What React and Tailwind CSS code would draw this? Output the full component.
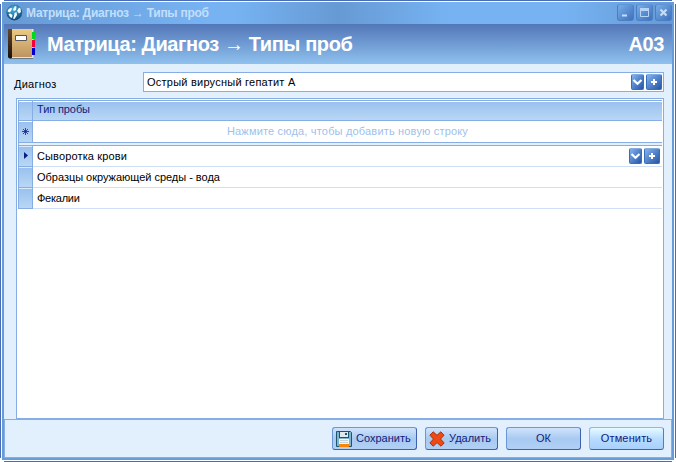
import React from "react";

function Globe() {
  return (
    <svg className="h-[17px] w-[17px] shrink-0" viewBox="0 0 17 17">
      <defs>
        <radialGradient id="globe" cx=".45" cy=".3" r=".7">
          <stop offset="0" stopColor="#4fb4dc" />
          <stop offset="1" stopColor="#0d4676" />
        </radialGradient>
      </defs>
      <circle cx="8.300" cy="8.500" r="7.900" fill="url(#globe)" />
      <path d="M1.500 7.500C2 5 4 3.500 6 4l-.5 2L4 8.500zM7 5.500l2-3.500 1.500.5-.5 3.500-2 1zM11 7l2-3.500 1.500 1L15 8l-2 1.500zM8.500 9l2-1 .5 3-2.500 4-1.500-.5 1-2.500zM2.500 10l2-.5 2 1.500-.5 3-2-1z" fill="#f0faff" />
    </svg>
  );
}

function Book() {
  return (
    <svg className="h-8 w-7 shrink-0" viewBox="0 0 28 32">
      <defs>
        <linearGradient id="cover" x2="0" y2="1">
          <stop stopColor="#edca85" />
          <stop offset="1" stopColor="#bd9461" />
        </linearGradient>
        <linearGradient id="spine" x2="0" y2="1">
          <stop stopColor="#65482c" />
          <stop offset="1" stopColor="#17100d" />
        </linearGradient>
      </defs>
      <path d="M2 29h24v1.500H2z" fill="#4a3a2b" />
      <path d="M5 1h21.500v29H5z" fill="#eee1c5" />
      <path d="M5 1h20v28H5z" fill="url(#cover)" />
      <path d="M1 1h4v28l-1 1.500-3-1z" fill="url(#spine)" />
      <path d="M8.500 7.500h11v5h-11z" fill="#fff" stroke="#53545c" />
      <path d="M25 4h3v7h-3z" fill="#00d820" />
      <path d="M25 12h3v7h-3z" fill="#f4003a" />
      <path d="M25 20h3v7h-3z" fill="#0000d0" />
    </svg>
  );
}

function WindowButton({ children }) {
  return (
    <div className="h-[17px] w-[17px] rounded-[3px] border border-[#4b7fc5] border-t-[#5f95d8] bg-linear-to-br from-[#79ade8] to-[#3c72bd]">
      <svg className="block h-[15px] w-[15px]" viewBox="0 0 15 15">{children}</svg>
    </div>
  );
}

function FieldButtons() {
  return (
    <div className="flex gap-[2px]">
      <div className="h-4 w-[13px] rounded-[2px] border border-[#386db8] border-t-[#82abe0] bg-linear-to-br from-[#84b3ee] to-[#2456a8]">
        <svg className="block h-[14px] w-[11px]" viewBox="0 0 11 14">
          <path d="M1.500 5l4 3.700L9.500 5" fill="none" stroke="#fff" strokeWidth="2.200" />
        </svg>
      </div>
      <div className="h-4 w-4 rounded-[2px] border border-[#386db8] border-t-[#82abe0] bg-linear-to-br from-[#84b3ee] to-[#2456a8]">
        <svg className="block h-[14px] w-[14px]" viewBox="0 0 14 14">
          <path d="M4 7h6M7 4v6" fill="none" stroke="#fff" strokeWidth="2" />
        </svg>
      </div>
    </div>
  );
}

function Floppy() {
  return (
    <svg className="h-4 w-4 shrink-0" viewBox="0 0 16 16">
      <path d="M.5.5h14l1 1v14H.5z" fill="#7fb4cc" stroke="#1d556e" />
      <path d="M3 0h10v7H3z" fill="#1d556e" />
      <path d="M4 1h8v5H4z" fill="#dfe8ec" />
      <path d="M9 2h2v2H9z" fill="#1d556e" />
      <path d="M3 8h10v8H3z" fill="#f3f6f8" />
      <path d="M4 9.500h8M4 11.500h8" stroke="#c6d2d8" />
      <path d="M3 13h10v3H3z" fill="#f58508" />
    </svg>
  );
}

function Cross() {
  return (
    <svg className="h-4 w-4 shrink-0" viewBox="0 0 16 16">
      <path d="M4.200.8L8 4.300 11.800.8l3.200 3.400L11.500 8l3.700 4-3.200 3.200L8 11.600 4.200 15.200.9 12 4.500 8 .9 4.200z" fill="#f04a12" stroke="#a8300e" strokeLinejoin="round" />
    </svg>
  );
}

const button =
  "flex h-[23px] items-center rounded-[3px] border border-[#6d96d8] border-r-[#3f5fb0] border-b-[#3f5fb0] bg-linear-to-b from-[#cfe4fb] via-[#a9caf0] to-[#b0d0f6] text-[#14207c]";

function Row({ children, marker, buttons, tracking }) {
  return (
    <div className="flex h-[21px]">
      <div className="flex w-[15px] items-center border-x border-b border-[#86aee4] bg-linear-to-b from-[#98c0ee] to-[#b9d7f5] pl-[5px] shadow-[inset_0_1px_#d8eafc]">
        {marker && (
          <svg className="mb-px h-[7px] w-1" viewBox="0 0 4 7">
            <path d="M0 0l4 3.500L0 7z" fill="#0c1c80" />
          </svg>
        )}
      </div>
      <div className="flex flex-1 items-start justify-between border-b border-[#cfdff5] bg-white pr-[2px] pl-1">
        <span className={"leading-[21px] " + tracking}>{children}</span>
        {buttons && <div className="pt-[2px]"><FieldButtons /></div>}
      </div>
    </div>
  );
}

export default function App() {
  return (
    <div className="grid h-[462px] w-[676px] grid-cols-[1px_1px_1fr_1px_1px] grid-rows-[1px_1px_1fr_1px_1px] overflow-hidden bg-white font-['Liberation_Sans',Arial,sans-serif] text-[11px] whitespace-nowrap text-black">
      <div className="col-start-3 row-start-1 mx-[2px] bg-[#4a6bb5]" />
      <div className="col-start-1 row-start-3 my-[2px] bg-[#4a6bb5]" />
      <div className="col-start-5 row-start-3 my-[2px] bg-[#4a6bb5]" />
      <div className="col-start-3 row-start-5 mx-[2px] bg-[#4a6bb5]" />
      <div className="col-start-3 row-start-3 flex flex-col border-x-2 border-b-2 border-[#669cd8] bg-[#e2f0fe]">
        <header className="flex h-[22px] shrink-0 items-center bg-[linear-gradient(90deg,#669ad4_0%,#77b3f3_31%,#77b3f3_34%,#669ad4_50%,#77b3f3_67%,#77b3f3_83%,#669ad4_100%)] pb-px pl-[2px]">
          <Globe />
          <span className="ml-[3px] text-[12px] font-bold tracking-[-0.26px] text-[#c2dffc]">
            Матрица: Диагноз <span className="font-normal">→</span> Типы проб
          </span>
          <div className="ml-auto flex gap-[2px]">
            <WindowButton><path d="M4 10.500h5" stroke="#c5def8" strokeWidth="2" /></WindowButton>
            <WindowButton><path d="M3.500 4v7.500h8V4M3 4.500h9" fill="none" stroke="#b7d4f5" /><path d="M3 3h9v3H3z" fill="#b7d4f5" /></WindowButton>
            <WindowButton><path d="M4.500 4.500l6 6M10.500 4.500l-6 6" stroke="#c5def8" strokeWidth="2.200" /></WindowButton>
          </div>
        </header>
        <div className="flex h-10 shrink-0 items-center bg-linear-to-b from-[#5377b8] to-[#8fc1ee] pr-2 pl-[3px] text-[20px] font-bold tracking-[-0.4px] text-white">
          <Book />
          <span className="ml-3">
            Матрица: Диагноз <span className="font-normal">→</span> Типы проб
          </span>
          <span className="ml-auto">A03</span>
        </div>
        <main className="flex flex-1 flex-col pt-2">
          <div className="flex h-5 pl-[10px]">
            <label className="w-[129px] pt-1 tracking-[0.25px]">Диагноз</label>
            <div className="flex h-5 w-[521px] items-center justify-between border border-[#86aee4] bg-white pr-px pl-[3px]">
              <span className="tracking-[0.23px]">Острый вирусный гепатит A</span>
              <FieldButtons />
            </div>
          </div>
          <div className="mt-[6px] ml-3 flex w-[648px] flex-1 flex-col border border-b-0 border-[#86aee4] bg-white p-px">
            <div className="flex h-[21px] border-y border-[#86aee4] text-[#14207c]">
              <div className="w-[15px] border-x border-[#86aee4] bg-linear-to-b from-[#98c0ee] to-[#b9d7f5] shadow-[inset_0_1px_white]" />
              <div className="flex-1 bg-linear-to-b from-[#98c0ee] to-[#b9d7f5] pl-1 leading-[17px] tracking-[-0.1px] shadow-[inset_0_1px_white]">Тип пробы</div>
            </div>
            <div className="flex h-[22px] border-b border-[#86aee4]">
              <div className="flex w-[15px] items-center justify-center border-x border-[#86aee4] bg-linear-to-b from-[#98c0ee] to-[#b9d7f5] shadow-[inset_0_1px_white]">
                <svg className="mb-px h-[7px] w-[7px]" viewBox="0 0 7 7">
                  <path d="M3.500 0v7M0 3.500h7M1 1l5 5M6 1L1 6" stroke="#14207c" strokeWidth=".8" />
                </svg>
              </div>
              <span className="flex-1 text-center leading-[21px] tracking-[0.18px] text-[#a0bfec]">Нажмите сюда, чтобы добавить новую строку</span>
            </div>
            <div className="h-[3px] border-b border-l border-[#86aee4] bg-[#e2f0fe]" />
            <Row marker buttons tracking="tracking-[0.13px]">Сыворотка крови</Row>
            <Row tracking="tracking-[-0.02px]">Образцы окружающей среды - вода</Row>
            <Row tracking="tracking-[-0.25px]">Фекалии</Row>
          </div>
          <div className="ml-3 h-px w-[648px] bg-[#86aee4]" />
        </main>
        <footer className="flex h-[39px] shrink-0 items-start justify-end gap-2 border border-[#86aee4] pt-[7px] pr-[7px]">
          <button className={button + " w-[85px] gap-1 pl-[3px]"}><Floppy />Сохранить</button>
          <button className={button + " w-[73px] gap-1 pl-[3px]"}><Cross />Удалить</button>
          <button className={button + " w-[75px] justify-center"}>ОК</button>
          <button className="flex h-[23px] w-[75px] items-center justify-center rounded-[3px] border border-[#8bb8f0] border-r-[#527cc8] border-b-[#3f5fb0] bg-linear-to-b from-[#e6fbff] via-[#b9dcff] to-[#a8d0fb] tracking-[0.15px] text-[#14207c]">Отменить</button>
        </footer>
      </div>
    </div>
  );
}
